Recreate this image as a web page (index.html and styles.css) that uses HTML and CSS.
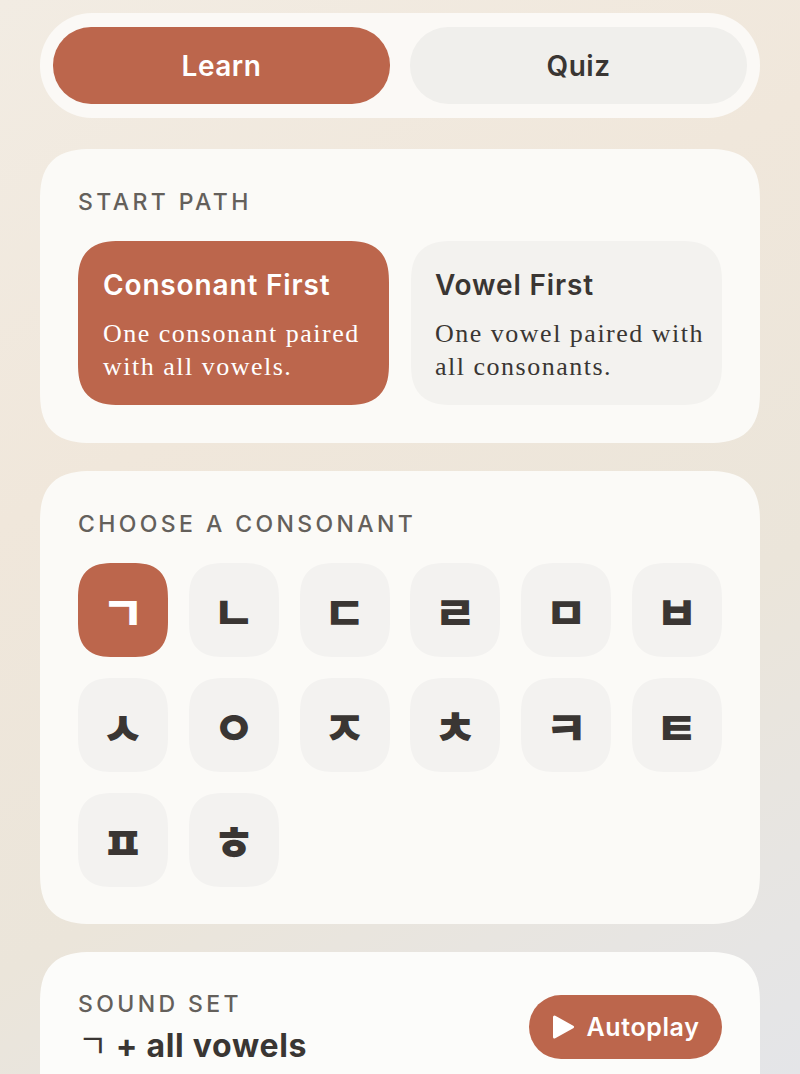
FILE: index.html
```html
<!DOCTYPE html>
<html lang="ko">
<head>
<meta charset="utf-8">
<title>Hangul</title>
<link rel="stylesheet" href="styles.css">
</head>
<body>
<main class="app">
  <nav class="switch">
    <button class="switch-btn on">Learn</button>
    <button class="switch-btn">Quiz</button>
  </nav>
  <section class="card">
    <h2 class="label">START PATH</h2>
    <div class="paths">
      <button class="path on"><strong>Consonant First</strong><span>One consonant paired with all vowels.</span></button>
      <button class="path"><strong>Vowel First</strong><span>One vowel paired with all consonants.</span></button>
    </div>
  </section>
  <section class="card card-choose">
    <h2 class="label">CHOOSE A CONSONANT</h2>
    <div class="tiles">
      <button class="tile on">ㄱ</button><button class="tile">ㄴ</button><button class="tile">ㄷ</button><button class="tile">ㄹ</button><button class="tile">ㅁ</button><button class="tile">ㅂ</button>
      <button class="tile">ㅅ</button><button class="tile">ㅇ</button><button class="tile">ㅈ</button><button class="tile">ㅊ</button><button class="tile">ㅋ</button><button class="tile">ㅌ</button>
      <button class="tile">ㅍ</button><button class="tile">ㅎ</button>
    </div>
  </section>
  <section class="card card-sound">
    <div>
      <h2 class="label label-sm">SOUND SET</h2>
      <p class="set-title"><span class="jamo">ㄱ</span> + all vowels</p>
    </div>
    <button class="autoplay">
      <svg class="play" viewBox="0 0 22 24" aria-hidden="true"><path d="M2 2 L20 12 L2 22 Z" fill="#fff" stroke="#fff" stroke-width="3" stroke-linejoin="round"/></svg>
      <span>Autoplay</span>
    </button>
  </section>
</main>
</body>
</html>
```
FILE: styles.css
```css
* { box-sizing: border-box; }
html, body { margin: 0; height: 1074px; overflow: hidden; }
body {
  background: linear-gradient(152deg, #f2ece3 0%, #f0e7db 35%, #ebe5da 65%, #e4e5e8 100%);
  font-family: Inter, "Noto Sans CJK KR", sans-serif;
  color: #3a3633;
}
button { font-family: inherit; border: 0; color: inherit; padding: 0; }
.app { padding: 13px 40px 0; display: flex; flex-direction: column; height: 1074px; overflow: hidden; }
.switch {
  flex: none;
  height: 105px;
  padding: 14px 13px;
  display: flex;
  gap: 20px;
  background: #fbf9f6;
  border-radius: 52px;
  margin-bottom: 31px;
}
.switch-btn {
  flex: 1;
  border-radius: 38px;
  background: #f0efec;
  font-size: 28px;
  font-weight: 600;
  letter-spacing: 0.5px;
}
.on { background: #bc664c; color: #fff; }
.card {
  flex: none;
  background: #fbfaf7;
  border-radius: 52px;
  corner-shape: superellipse(1.4);
  padding: 38px;
  margin-bottom: 28px;
}
.label {
  margin: 0 0 25px;
  padding-top: 1px;
  font-size: 23px;
  line-height: 28px;
  font-weight: 500;
  letter-spacing: 3.4px;
  color: #64605b;
}
.paths { display: grid; grid-template-columns: 311px 311px; gap: 22px; }
.path {
  height: 164px;
  padding: 26px 0 0 25px;
  border-radius: 42px;
  corner-shape: superellipse(1.4);
  background: #f3f2ef;
  text-align: left;
  display: flex;
  flex-direction: column;
  align-items: flex-start;
}
.path + .path { padding-left: 24px; }
.path.on { background: #bc664c; }
.path strong { font-size: 28px; line-height: 36px; font-weight: 600; letter-spacing: 0.85px; margin-bottom: 14px; }
.path span { font-family: "Liberation Serif", serif; font-size: 26px; line-height: 33px; letter-spacing: 1.5px; }
.card-choose { height: 453px; }
.tiles { display: grid; grid-template-columns: repeat(6, 90px); grid-auto-rows: 94px; gap: 21px 20.8px; }
.tile {
  border-radius: 36px;
  corner-shape: superellipse(1.4);
  background: #f3f2f0;
  font-family: "Noto Sans CJK KR", sans-serif;
  font-size: 46px;
  line-height: 1;
  font-weight: 900;
}
.tile.on { background: #bc664c; }
.card-sound {
  height: 200px;
  margin-bottom: 0;
  padding-top: 38px;
  display: flex;
  justify-content: space-between;
  align-items: flex-start;
  background: #fcfcfa;
}
.label-sm { margin: 0; padding-top: 0; letter-spacing: 3.4px; }
.set-title { margin: 5px 0 0; font-size: 32px; line-height: 40px; font-weight: 700; letter-spacing: 0.7px; }
.jamo { font-family: "Noto Sans CJK KR", sans-serif; font-weight: 400; letter-spacing: 0; }
.autoplay {
  width: 193px;
  height: 64px;
  margin-top: 5px;
  border-radius: 32px;
  background: #bc664c;
  color: #fff;
  font-size: 25px;
  font-weight: 600;
  letter-spacing: 0.6px;
  display: flex;
  align-items: center;
  justify-content: center;
  gap: 12px;
}
.play { width: 23px; height: 24px; }
```
